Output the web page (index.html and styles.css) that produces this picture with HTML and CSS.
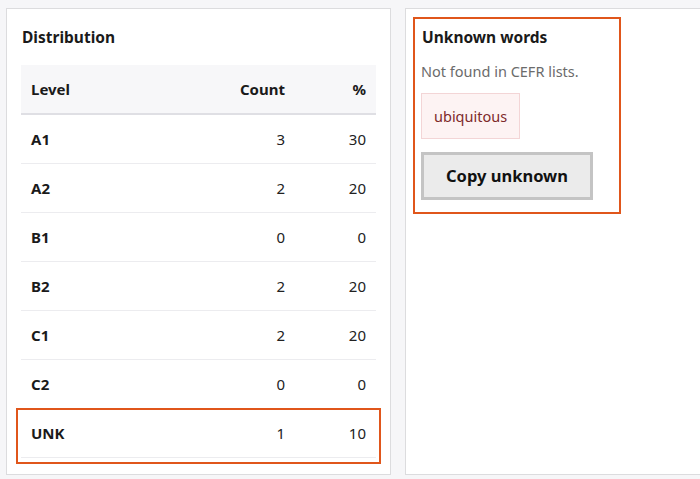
FILE: index.html
```html
<!DOCTYPE html>
<html lang="en">
<head>
  <meta charset="UTF-8">
  <meta name="viewport" content="width=device-width, initial-scale=1.0">
  <title>CEFR levels</title>
  <link rel="stylesheet" href="styles.css">
</head>
<body>

<div class="layout">
  <!-- Distribución por nivel -->
  <div class="card">
    <h3>Distribution</h3>
    <table class="dist">
      <thead>
        <tr>
          <th>Level</th>
          <th class="num count">Count</th>
          <th class="num pct">%</th>
        </tr>
      </thead>
      <tbody>
        <tr><td>A1</td><td class="num">3</td><td class="num">30</td></tr>
        <tr><td>A2</td><td class="num">2</td><td class="num">20</td></tr>
        <tr><td>B1</td><td class="num">0</td><td class="num">0</td></tr>
        <tr><td>B2</td><td class="num">2</td><td class="num">20</td></tr>
        <tr><td>C1</td><td class="num">2</td><td class="num">20</td></tr>
        <tr><td>C2</td><td class="num">0</td><td class="num">0</td></tr>
        <tr class="mark"><td>UNK</td><td class="num">1</td><td class="num">10</td></tr>
      </tbody>
    </table>
  </div>

  <!-- Palabras desconocidas -->
  <div class="card side">
    <div class="unknown">
      <h3>Unknown words</h3>
      <p class="hint">Not found in CEFR lists.</p>
      <div class="chips">
        <span class="chip">ubiquitous</span>
      </div>
      <button class="copy-btn">Copy unknown</button>
    </div>
  </div>
</div>

</body>
</html>
```

FILE: styles.css
```css
/* Estilos generales */
html {
  overflow: hidden;
}
body {
  font-family: "Noto Sans", "Open Sans", Arial, sans-serif;
  background: #f6f6f8;
  color: #1a1a1a;
  margin: 0;
  padding: 8px 0 0 6px;
}
.layout {
  display: grid;
  grid-template-columns: 385px 320px;
  gap: 14px;
  width: 719px;
}
.card {
  background: #fff;
  border: 1px solid #dcdcde;
  height: 467px;
  box-sizing: border-box;
  padding: 18px 14px 14px;
}
h3 {
  font-size: 15.5px;
  font-weight: 700;
  line-height: 20px;
  margin: 0 0 18px 1px;
}

/* Tabla de distribución */
table.dist {
  width: 100%;
  border-collapse: collapse;
  font-size: 15px;
}
.dist th,
.dist td {
  padding: 13px 10px;
  line-height: 22px;
  text-align: left;
}
.dist th {
  background: #f7f7f9;
  border-bottom: 2px solid #dfdfe4;
  font-weight: 700;
}
.dist td {
  border-bottom: 1px solid #ececef;
  color: #222;
}
.dist td:first-child {
  font-weight: 700;
  color: #1a1a1a;
}
.dist .num {
  text-align: right;
}
.dist .pct {
  width: 61px;
}
.dist .count {
  width: 100px;
}
.dist tr.mark {
  position: relative;
}
.dist tr.mark::after {
  content: "";
  position: absolute;
  top: -1px;
  bottom: -6px;
  left: -5px;
  right: -5px;
  border: 2px solid #e0561b;
  pointer-events: none;
}

/* Panel lateral */
.card.side {
  padding: 8px 14px 14px 7px;
}
.unknown {
  width: 208px;
  box-sizing: border-box;
  border: 2px solid #e0561b;
  padding: 8px 6px 12px 6px;
}
.unknown h3 {
  margin-bottom: 14px;
}
p.hint {
  font-size: 14.5px;
  line-height: 20px;
  color: #6b6b6b;
  margin: 0 0 12px;
}
.chips {
  display: flex;
  gap: 8px;
  margin-bottom: 13px;
}
.chip {
  background: #fdf3f3;
  border: 1px solid #f3d5d6;
  color: #7e2a2a;
  font-size: 14.5px;
  line-height: 20px;
  padding: 12px 12px;
}
button.copy-btn {
  font-family: inherit;
  background: #ebebeb;
  border: 3px solid #c4c4c4;
  color: #111;
  font-size: 16.5px;
  font-weight: 700;
  line-height: 22px;
  padding: 10px 0;
  width: 172px;
  cursor: pointer;
}
```
